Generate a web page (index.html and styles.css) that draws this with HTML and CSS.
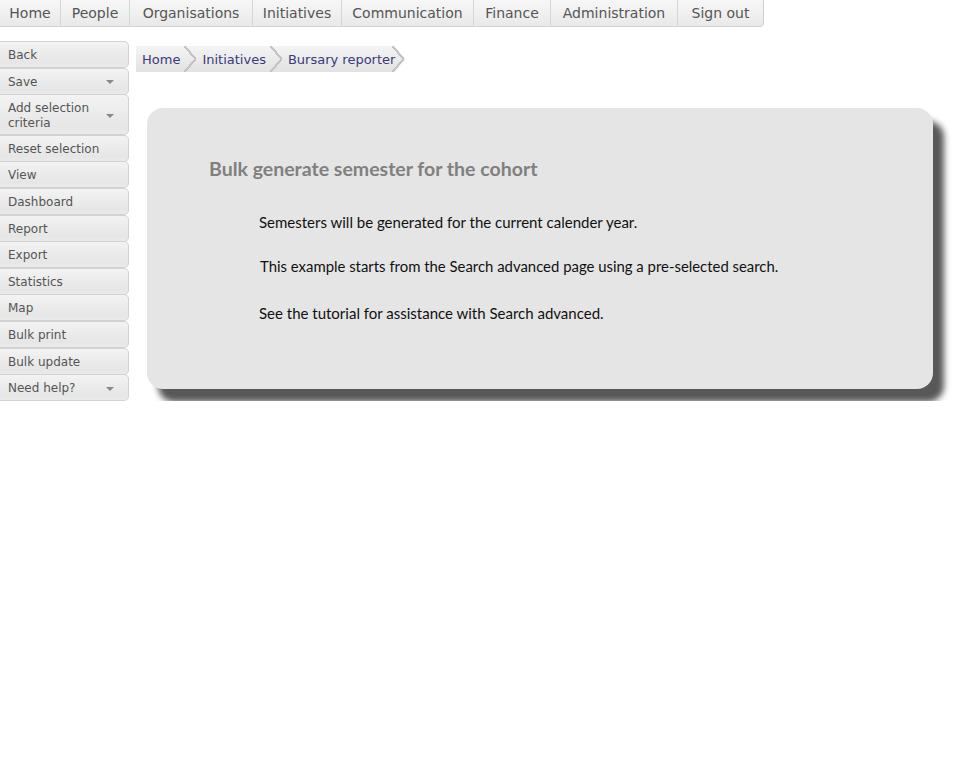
FILE: index.html
```html
<!DOCTYPE html>
<html>
<head>
<meta charset="utf-8">
<link rel="stylesheet" href="styles.css">
</head>
<body>
<nav class="topnav">
  <a class="tab t-home">Home</a>
  <a class="tab t-people">People</a>
  <a class="tab t-org">Organisations</a>
  <a class="tab t-init">Initiatives</a>
  <a class="tab t-comm">Communication</a>
  <a class="tab t-fin">Finance</a>
  <a class="tab t-admin">Administration</a>
  <a class="tab t-out last">Sign out</a>
</nav>
<div class="layout">
  <aside class="sidebar">
    <div class="btn">Back</div>
    <div class="btn drop">Save</div>
    <div class="btn drop two">Add selection<br>criteria</div>
    <div class="btn">Reset selection</div>
    <div class="btn">View</div>
    <div class="btn">Dashboard</div>
    <div class="btn">Report</div>
    <div class="btn">Export</div>
    <div class="btn">Statistics</div>
    <div class="btn">Map</div>
    <div class="btn">Bulk print</div>
    <div class="btn">Bulk update</div>
    <div class="btn drop">Need help?</div>
  </aside>
  <main class="main">
    <div class="crumbs">
      <span class="crumb">Home</span>
      <span class="crumb">Initiatives</span>
      <span class="crumb">Bursary reporter</span>
    </div>
    <section class="panel">
      <h1 class="title">Bulk generate semester for the cohort</h1>
      <p class="line l1">Semesters will be generated for the current calender year.</p>
      <p class="line l2">This example starts from the Search advanced page using a pre-selected search.</p>
      <p class="line l3">See the tutorial for assistance with Search advanced.</p>
    </section>
  </main>
</div>
</body>
</html>
```
FILE: styles.css
```css
html, body {
  margin: 0;
  padding: 0;
  background: #fff;
}
body {
  font-family: "DejaVu Sans", Verdana, sans-serif;
}
.topnav {
  display: flex;
  height: 26px;
  width: max-content;
  border-bottom: 1px solid #d4d4d4;
  border-right: 1px solid #cfcfcf;
  border-bottom-right-radius: 4px;
  background: linear-gradient(#f7f7f7, #e9e9e9);
}
.tab {
  display: flex;
  align-items: center;
  justify-content: center;
  font-size: 14px;
  color: #555;
  border-right: 1px solid #d6d6d6;
  height: 26px;
  box-sizing: border-box;
  white-space: nowrap;
}
.t-home { width: 61px; }
.t-people { width: 69px; }
.t-org { width: 123px; }
.t-init { width: 89px; }
.t-comm { width: 132px; }
.t-fin { width: 77px; }
.t-admin { width: 127px; }
.t-out { width: 85px; }
.tab.last {
  border-right: none;
}
.layout {
  display: flex;
  align-items: flex-start;
}
.sidebar {
  width: 129px;
  margin-top: 14px;
  display: flex;
  flex-direction: column;
}
.btn {
  position: relative;
  box-sizing: border-box;
  height: 27px;
  margin-bottom: -0.4px;
  padding: 2px 0 0 8px;
  display: flex;
  align-items: center;
  font-size: 12px;
  line-height: 15px;
  color: #555;
  background: linear-gradient(#f3f3f3, #e6e6e6 80%, #eaeaea);
  border: 1px solid #d2d2d2;
  border-left: none;
  border-radius: 0 5px 5px 0;
}
.btn.two {
  height: 41px;
}
.btn.drop::after {
  content: "";
  position: absolute;
  right: 14px;
  top: 50%;
  margin-top: -1px;
  border-left: 4px solid transparent;
  border-right: 4px solid transparent;
  border-top: 4px solid #888;
}
.main {
  margin-left: 7px;
  flex: 1;
}
.crumbs {
  display: flex;
  margin-top: 19px;
  height: 26px;
  width: max-content;
  background: linear-gradient(#f4f4f4, #e2e2e2);
  clip-path: polygon(0 0, calc(100% - 11px) 0, 100% 50%, calc(100% - 11px) 100%, 0 100%);
}
.crumb {
  position: relative;
  display: flex;
  align-items: center;
  font-size: 13px;
  color: #3a3a7a;
  padding: 0 11px 0 6px;
}
.crumb + .crumb {
  padding-left: 11px;
}
.crumb:last-child {
  padding-right: 10px;
}
.crumb::after {
  content: "";
  position: absolute;
  right: -5px;
  top: 0;
  width: 12px;
  height: 26px;
  background: linear-gradient(to top right, transparent 44%, #c4c4c4 44%, #c4c4c4 56%, transparent 56%) top / 100% 50% no-repeat,
              linear-gradient(to bottom right, transparent 44%, #c4c4c4 44%, #c4c4c4 56%, transparent 56%) bottom / 100% 50% no-repeat;
}
.crumb:last-child::after {
  right: 1px;
}
.panel {
  margin: 36px 0 0 11px;
  width: 786px;
  height: 281px;
  box-sizing: border-box;
  background: #e5e5e5;
  border-radius: 16px;
  box-shadow: 11px 13px 6px #585858;
  padding: 49px 0 0 62px;
  font-family: Lato, "Open Sans", sans-serif;
}
.title {
  margin: 0;
  font-size: 19.5px;
  line-height: 24px;
  font-weight: bold;
  color: #808080;
}
.line {
  margin: 0;
  padding-left: 50px;
  font-size: 15px;
  line-height: 20px;
  color: #111;
}
.l1 { margin-top: 31px; }
.l2 { margin-top: 24px; padding-left: 51px; font-size: 14.9px; }
.l3 { margin-top: 27px; }
```
